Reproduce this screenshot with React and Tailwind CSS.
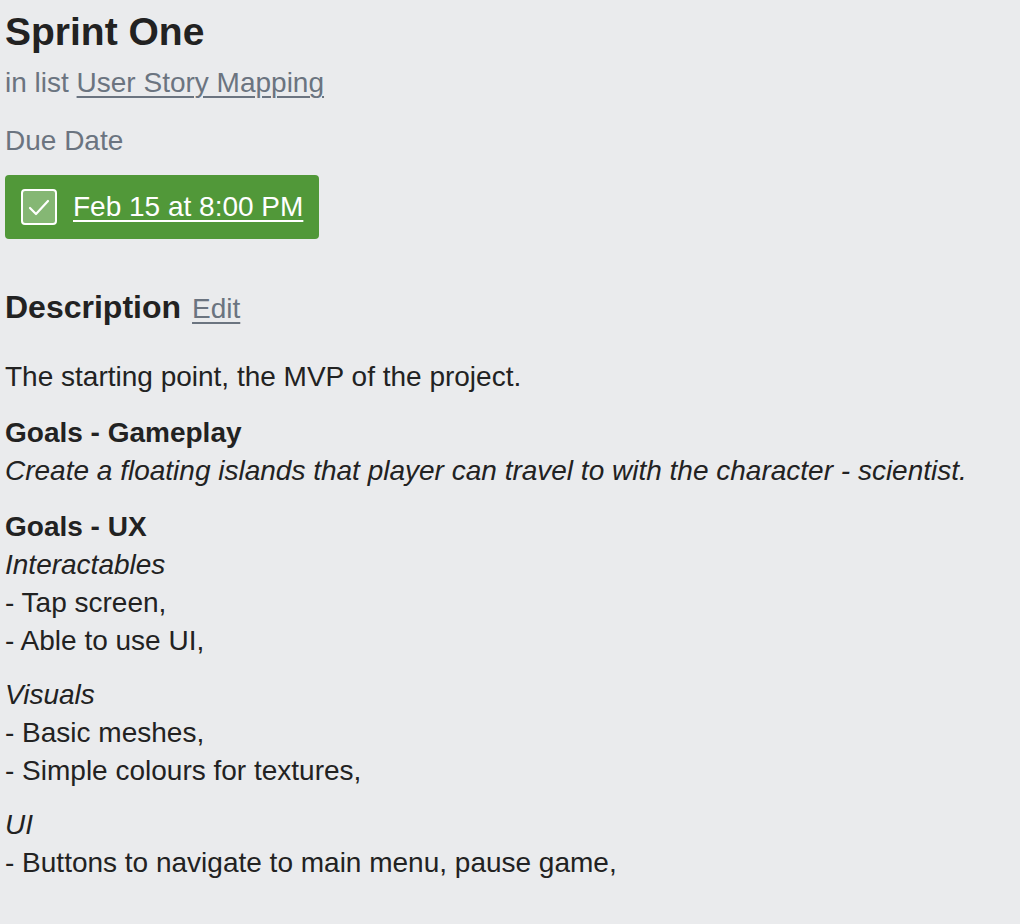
export default function App() {
  return (
    <div className="min-h-screen bg-[#eaebed] text-[#222] font-['Liberation_Sans',Arial,sans-serif] text-[28px] leading-[38px] pl-[5px] pt-[8px]">
      <h1 className="text-[39px] leading-[48px] font-bold">Sprint One</h1>
      <p className="text-[#6b7480] mt-[8px]">
        in list <a className="underline decoration-2 underline-offset-[4px]">User Story Mapping</a>
      </p>
      <p className="text-[#6b7480] mt-[20px]">Due Date</p>
      <div className="mt-[15px] inline-flex items-center gap-[16px] h-[64px] px-[16px] bg-[#519839] rounded-[4px] text-white">
        <span className="w-[36px] h-[36px] rounded-[4px] border-2 border-white bg-white/30 flex items-center justify-center">
          <svg width="24" height="24" viewBox="0 0 24 24" fill="none" stroke="white" strokeWidth="2.2" strokeLinecap="round" strokeLinejoin="round">
            <path d="M3 13l6 6L21 6" />
          </svg>
        </span>
        <a className="underline decoration-2 underline-offset-[4px]">Feb 15 at 8:00 PM</a>
      </div>
      <div className="mt-[49px] flex items-baseline gap-[11px]">
        <h2 className="text-[32px] font-bold">Description</h2>
        <a className="text-[#6b7480] underline decoration-2 underline-offset-[4px]">Edit</a>
      </div>
      <div className="mt-[30px]">
        <p>The starting point, the MVP of the project.</p>
        <p className="mt-[18px]">
          <strong>Goals - Gameplay</strong>
          <br />
          <em>Create a floating islands that player can travel to with the character - scientist.</em>
        </p>
        <p className="mt-[18px]">
          <strong>Goals - UX</strong>
          <br />
          <em>Interactables</em>
          <br />- Tap screen,
          <br />- Able to use UI,
        </p>
        <p className="mt-[16px]">
          <em>Visuals</em>
          <br />- Basic meshes,
          <br />- Simple colours for textures,
        </p>
        <p className="mt-[16px]">
          <em>UI</em>
          <br />- Buttons to navigate to main menu, pause game,
        </p>
      </div>
    </div>
  );
}
